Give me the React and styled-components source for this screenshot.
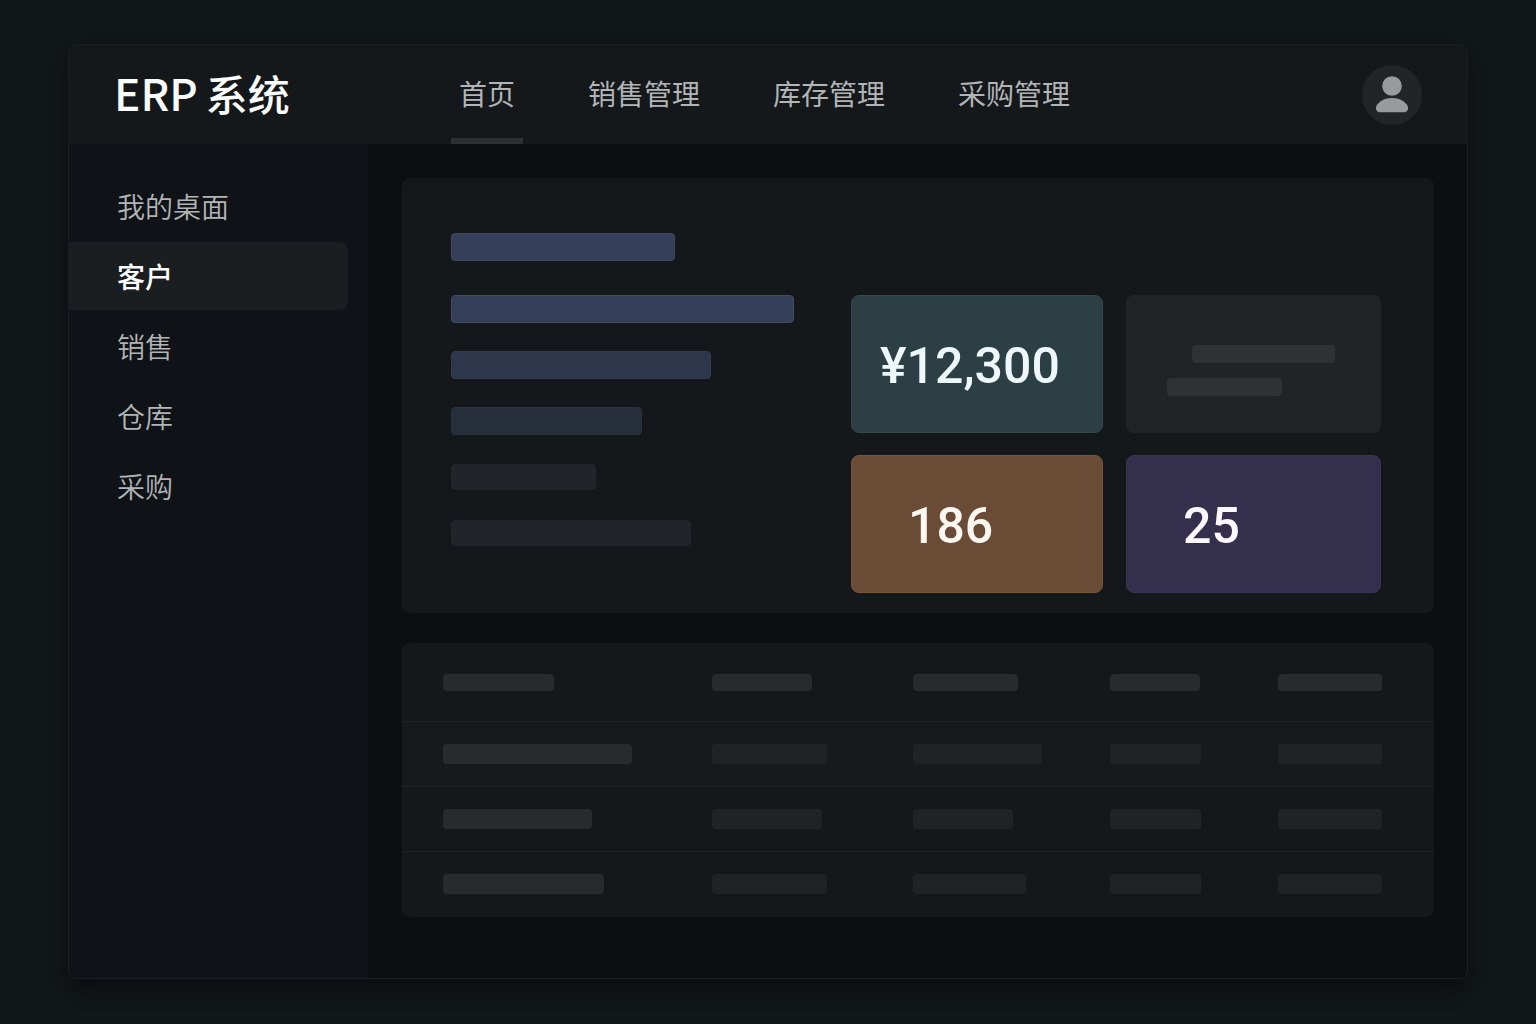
import React from 'react';
import styled, { createGlobalStyle } from 'styled-components';

const GlobalStyle = createGlobalStyle`
  * {
    box-sizing: border-box;
  }

  body {
    margin: 0;
    background: #121719;
    color: #b2b4b6;
    font-family: "Noto Sans CJK SC", "Noto Sans", sans-serif;
  }
`;

const StyledPage = styled.div`
  min-height: 100vh;
  padding: 44px 68px 45px;
  display: flex;
`;

const StyledWindow = styled.div`
  flex: 1;
  min-width: 0;
  display: flex;
  flex-direction: column;
  border: 1px solid #1b1f22;
  border-radius: 8px;
  overflow: hidden;
  background: #0d0e12;
  box-shadow: 0 10px 20px rgba(8, 9, 13, 0.7);
`;

const StyledHeader = styled.header`
  height: 99px;
  padding: 0 45px;
  display: flex;
  align-items: center;
  background: #14181b;
`;

const StyledBrand = styled.h1`
  flex: 0 0 337px;
  margin: 0;
  padding-bottom: 4px;
  display: flex;
  align-items: baseline;
  gap: 8px;
  color: #fbfcfd;
  font-size: 42px;
  font-weight: 500;
  line-height: 60px;
  white-space: nowrap;
`;

const StyledBrandLatin = styled.span`
  font-size: 44px;
`;

const StyledNav = styled.nav`
  height: 100%;
  display: flex;
  gap: 57px;
`;

const StyledNavLink = styled.a`
  padding: 0 8px;
  display: flex;
  align-items: center;
  border-top: 2px solid transparent;
  border-bottom: 6px solid ${(props) => (props.$active ? '#2e3134' : 'transparent')};
  color: #b2b4b6;
  font-size: 28px;
  line-height: 40px;
  text-decoration: none;
  white-space: nowrap;
`;

const StyledAvatar = styled.button`
  width: 60px;
  height: 60px;
  margin-left: auto;
  padding: 0;
  border: none;
  border-radius: 50%;
  background: #212528;
  cursor: pointer;

  svg {
    display: block;
  }
`;

const StyledBody = styled.div`
  flex: 1;
  display: flex;
`;

const StyledSidebar = styled.nav`
  flex: 0 0 299px;
  padding: 28px 20px 28px 0;
  display: flex;
  flex-direction: column;
  gap: 2px;
  background: #0f1317;
`;

const StyledSideLink = styled.a`
  height: 68px;
  padding-left: 48px;
  display: flex;
  align-items: center;
  border-radius: 0 8px 8px 0;
  background: ${(props) => (props.$active ? '#1a1e21' : 'transparent')};
  color: ${(props) => (props.$active ? '#fbfcfd' : '#b2b4b6')};
  font-size: 28px;
  font-weight: ${(props) => (props.$active ? 500 : 350)};
  line-height: 40px;
  text-decoration: none;
`;

const StyledMain = styled.main`
  flex: 1;
  min-width: 0;
  padding: 34px 33px 34px 34px;
  display: flex;
  flex-direction: column;
  gap: 30px;
`;

const StyledPanel = styled.section`
  border-radius: 8px;
  background: #14181b;
  overflow: hidden;
`;

const StyledOverview = styled(StyledPanel)`
  padding: 55px 53px 20px 49px;
  display: flex;
  justify-content: space-between;
`;

const StyledBars = styled.div`
  display: flex;
  flex-direction: column;
`;

const StyledBarRow = styled.div`
  height: 56px;
  display: flex;
  align-items: center;
`;

const StyledBarTitle = styled.div`
  height: 48px;
`;

const StyledBar = styled.div`
  height: ${(props) => props.$height || 28}px;
  border: 1px solid ${(props) => props.$edge || props.$color};
  border-radius: 4px;
  background: ${(props) => props.$color};
`;

const StyledStats = styled.div`
  padding-top: 62px;
  display: grid;
  grid-template-columns: 252px 255px;
  grid-auto-rows: 138px;
  gap: 22px 23px;
`;

const StyledStat = styled.div`
  padding: 4px 0 0 ${(props) => props.$indent}px;
  display: flex;
  align-items: center;
  border: 1px solid ${(props) => props.$edge};
  border-radius: 8px;
  background: ${(props) => props.$color};
  color: ${(props) => props.$text};
  font-family: Roboto, sans-serif;
  font-size: 50px;
  font-weight: 500;
  line-height: 60px;
`;

const StyledEmptyStat = styled.div`
  padding: 50px 46px 0 41px;
  display: flex;
  flex-direction: column;
  gap: 15px;
  border-radius: 8px;
  background: #212326;
`;

const StyledLine = styled.div`
  width: ${(props) => props.$width}px;
  height: 18px;
  align-self: ${(props) => (props.$end ? 'flex-end' : 'flex-start')};
  border-radius: 4px;
  background: #2f3235;
`;

const StyledTable = styled.table`
  width: 100%;
  table-layout: fixed;
  border-collapse: separate;
  border-spacing: 0;
`;

const StyledRow = styled.tr`
  background: ${(props) => (props.$raised ? '#171a1d' : 'transparent')};

  th {
    height: 79px;
  }

  td {
    height: 65px;
  }

  th,
  td {
    padding: 0 0 0 41px;
    border-bottom: 1px solid #1e2225;
  }

  &:last-child td {
    border-bottom-color: transparent;
  }
`;

const StyledCellBar = styled.div`
  height: ${(props) => (props.$head ? 17 : 20)}px;
  border-radius: 4px;
  background: ${(props) => (props.$bright ? '#282b2e' : '#202326')};
`;

const navItems = ['首页', '销售管理', '库存管理', '采购管理'];

const sideItems = ['我的桌面', '客户', '销售', '仓库', '采购'];

const bars = [
  { width: 343, color: '#353f5a', edge: '#414b62' },
  { width: 260, color: '#2d364a', edge: '#343d4f' },
  { width: 191, color: '#262e3a', edge: '#2a323d' },
  { width: 145, color: '#212428', height: 26 },
  { width: 240, color: '#212428', height: 26 },
];

const columns = [269, 201, 197, 168, 197];

const headCells = [111, 100, 105, 90, 104];

const rows = [
  [189, 115, 129, 91, 104],
  [149, 110, 100, 91, 104],
  [161, 115, 113, 91, 104],
];

function UserIcon() {
  return (
    <svg width="60" height="60" viewBox="0 0 60 60" fill="#989b9e" aria-hidden="true">
      <circle cx="30" cy="21" r="9.8" />
      <path d="M30 33c-7.200 0-13.400 3.200-15.800 8.400-1 2.800.6 5.900 4.200 5.900h23.200c3.600 0 5.200-3.100 4.200-5.900C43.400 36.200 37.200 33 30 33z" />
    </svg>
  );
}

function Overview() {
  return (
    <StyledOverview>
      <StyledBars>
        <StyledBarTitle>
          <StyledBar $color="#353f5a" $edge="#414b62" style={{ width: 224 }} />
        </StyledBarTitle>
        {bars.map((bar) => (
          <StyledBarRow key={bar.width}>
            <StyledBar
              $color={bar.color}
              $edge={bar.edge}
              $height={bar.height}
              style={{ width: bar.width }}
            />
          </StyledBarRow>
        ))}
      </StyledBars>
      <StyledStats>
        <StyledStat $color="#2b3f44" $edge="#35494c" $text="#eef8fc" $indent={28}>¥12,300</StyledStat>
        <StyledEmptyStat>
          <StyledLine $width={143} $end />
          <StyledLine $width={115} />
        </StyledEmptyStat>
        <StyledStat $color="#6a4b35" $edge="#77583d" $text="#fdf7f1" $indent={56}>186</StyledStat>
        <StyledStat $color="#332f4c" $edge="#3a3651" $text="#fbf9ff" $indent={56}>25</StyledStat>
      </StyledStats>
    </StyledOverview>
  );
}

function DataTable() {
  return (
    <StyledPanel>
      <StyledTable>
        <colgroup>
          {columns.map((width, i) => (
            <col key={i} style={{ width }} />
          ))}
        </colgroup>
        <thead>
          <StyledRow>
            {headCells.map((width, i) => (
              <th key={i} scope="col">
                <StyledCellBar $head $bright style={{ width }} />
              </th>
            ))}
          </StyledRow>
        </thead>
        <tbody>
          {rows.map((cells, r) => (
            <StyledRow key={r} $raised={r === 0}>
              {cells.map((width, i) => (
                <td key={i}>
                  <StyledCellBar $bright={i === 0} style={{ width }} />
                </td>
              ))}
            </StyledRow>
          ))}
        </tbody>
      </StyledTable>
    </StyledPanel>
  );
}

function App() {
  return (
    <StyledPage>
      <GlobalStyle />
      <StyledWindow>
        <StyledHeader>
          <StyledBrand>
            <StyledBrandLatin>ERP</StyledBrandLatin>
            <span>系统</span>
          </StyledBrand>
          <StyledNav>
            {navItems.map((item, i) => (
              <StyledNavLink key={item} href="#" $active={i === 0}>{item}</StyledNavLink>
            ))}
          </StyledNav>
          <StyledAvatar type="button" aria-label="用户">
            <UserIcon />
          </StyledAvatar>
        </StyledHeader>
        <StyledBody>
          <StyledSidebar>
            {sideItems.map((item) => (
              <StyledSideLink key={item} href="#" $active={item === '客户'}>{item}</StyledSideLink>
            ))}
          </StyledSidebar>
          <StyledMain>
            <Overview />
            <DataTable />
          </StyledMain>
        </StyledBody>
      </StyledWindow>
    </StyledPage>
  );
}

export default App;
